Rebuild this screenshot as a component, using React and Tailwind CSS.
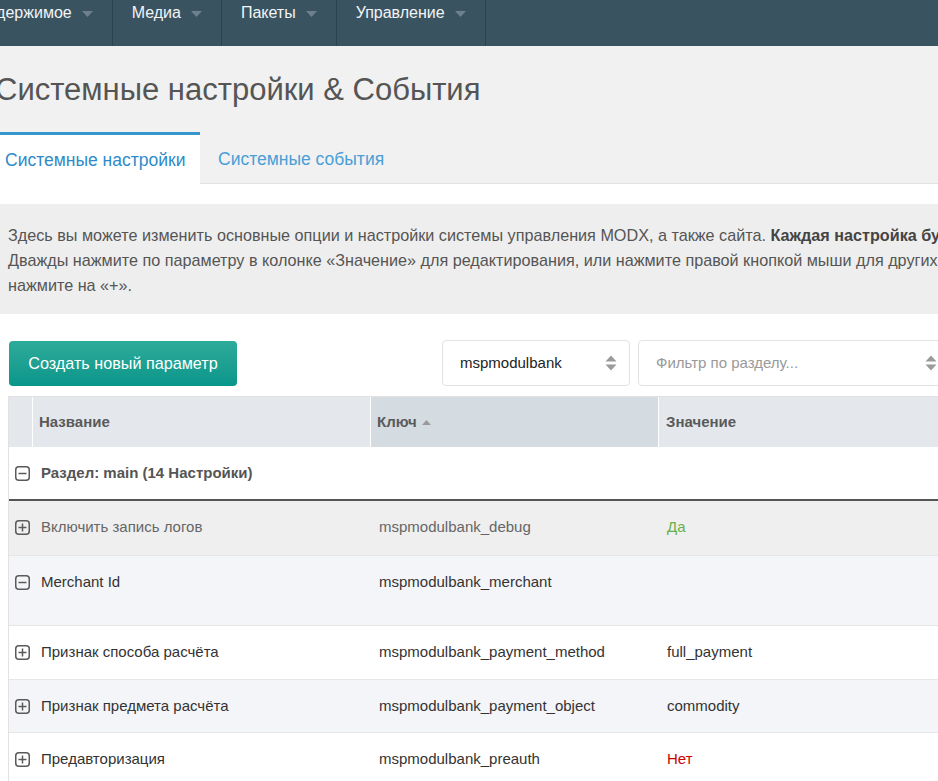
import React from "react";

const font = { fontFamily: '"Liberation Sans", Arial, sans-serif' };

function Caret() {
  return (
    <svg width="11" height="6" viewBox="0 0 11 6" className="shrink-0">
      <path d="M0 0 L11 0 L5.5 6 Z" fill="#6c818d" />
    </svg>
  );
}

function Spinner() {
  return (
    <svg width="12" height="16" viewBox="0 0 12 16" className="shrink-0">
      <path d="M6 0.5 L11.5 6.5 L0.5 6.5 Z" fill="#9a9a9a" />
      <path d="M0.5 9.5 L11.5 9.5 L6 15.5 Z" fill="#9a9a9a" />
    </svg>
  );
}

function BoxIcon({ plus }) {
  return (
    <svg width="15" height="15" viewBox="0 0 15 15" className="shrink-0">
      <rect x="0.75" y="0.75" width="13.5" height="13.5" rx="3" fill="none" stroke="#5a5a5a" strokeWidth="1.5" />
      <line x1="3.5" y1="7.5" x2="11.5" y2="7.5" stroke="#5a5a5a" strokeWidth="1.5" />
      {plus && <line x1="7.5" y1="3.5" x2="7.5" y2="11.5" stroke="#5a5a5a" strokeWidth="1.5" />}
    </svg>
  );
}

function NavItem({ label }) {
  return (
    <div className="flex items-start gap-[10px] pl-[19px] pr-[19px] pt-[4px] h-full border-r border-[#2b4250] shrink-0">
      <span className="text-[16px] text-[#f2f4f5] leading-[18px]">{label}</span>
      <span className="mt-[7px]"><Caret /></span>
    </div>
  );
}

const rows = [
  { name: "Включить запись логов", key: "mspmodulbank_debug", value: "Да", vc: "text-[#6ab04c]", bg: "bg-[#efefef]", h: "h-[55px]", muted: true, plus: true },
  { name: "Merchant Id", key: "mspmodulbank_merchant", value: "", vc: "", bg: "bg-[#f4f5f8]", h: "h-[70px]", plus: false },
  { name: "Признак способа расчёта", key: "mspmodulbank_payment_method", value: "full_payment", vc: "text-[#333]", bg: "bg-white", h: "h-[54px]", plus: true },
  { name: "Признак предмета расчёта", key: "mspmodulbank_payment_object", value: "commodity", vc: "text-[#333]", bg: "bg-[#f4f5f8]", h: "h-[53px]", plus: true },
  { name: "Предавторизация", key: "mspmodulbank_preauth", value: "Нет", vc: "text-[#cc0000]", bg: "bg-white", h: "h-[54px]", plus: true },
];

export default function App() {
  return (
    <div style={font} className="w-[938px] h-[781px] overflow-hidden bg-[#f1f1f1] relative">
      {/* Top nav */}
      <div className="h-[46px] bg-[#3a5361] flex overflow-hidden">
        <div className="flex ml-[-43px] h-full">
          <NavItem label="Содержимое" />
          <NavItem label="Медиа" />
          <NavItem label="Пакеты" />
          <NavItem label="Управление" />
        </div>
      </div>

      {/* Title */}
      <div className="ml-[-5px] mt-[26px] h-[36px] text-[31px] leading-[36px] text-[#555] whitespace-nowrap">
        Системные настройки &amp; События
      </div>

      {/* Tabs */}
      <div className="flex mt-[24px] h-[52px]">
        <div className="w-[200px] shrink-0 h-full bg-white border-t-[3px] border-[#3697cd] flex items-center pl-[5px] text-[17.5px] text-[#2e8bc9] whitespace-nowrap">
          <span className="mt-[2px]">Системные настройки</span>
        </div>
        <div className="flex-1 h-full border-b border-[#e2e2e2] flex items-center pl-[18px] text-[17.5px] text-[#4a9fd6] whitespace-nowrap">
          <span className="mt-[4px]">Системные события</span>
        </div>
      </div>

      {/* Panel */}
      <div className="bg-white pt-[20px] h-full">
        <div className="bg-[#eeeeee] h-[110px] pt-[19px] pl-[8px] text-[16.2px] leading-[25px] text-[#555] whitespace-nowrap">
          <div>
            Здесь вы можете изменить основные опции и настройки системы управления MODX, а также сайта.{" "}
            <b className="text-[#444]">Каждая настройка будет доступна сразу после её изменения.</b>
          </div>
          <div>
            Дважды нажмите по параметру в колонке «Значение» для редактирования, или нажмите правой кнопкой мыши для других опций. Для просмотра описания настройки,
          </div>
          <div>нажмите на «+».</div>
        </div>

        {/* Toolbar */}
        <div className="flex items-center mt-[26px] pl-[9px] h-[46px] whitespace-nowrap">
          <button className="w-[228px] shrink-0 h-[45px] rounded-[4px] bg-gradient-to-b from-[#2dab9a] to-[#05968a] text-white text-[16.2px] mt-[1px]">
            Создать новый параметр
          </button>
          <div className="ml-[205px] shrink-0 w-[188px] h-[46px] bg-white border border-[#e2e2e2] rounded-[4px] flex items-center justify-between pl-[17px] pr-[12px] text-[15px] text-[#222]">
            <span>mspmodulbank</span>
            <Spinner />
          </div>
          <div className="ml-[8px] w-[306px] shrink-0 h-[46px] bg-white border border-[#e2e2e2] rounded-[4px] flex items-center justify-between pl-[17px] pr-[6px] text-[15px] text-[#999]">
            <span>Фильтр по разделу...</span>
            <Spinner />
          </div>
        </div>

        {/* Table */}
        <div className="ml-[8px] mt-[10px] w-[1100px] border-l border-t border-[#e2e2e2] text-[15px]">
          <div className="flex h-[50px] bg-[#e4e8ec] font-bold text-[#5a5a5a]">
            <div className="w-[24px] border-r border-white" />
            <div className="w-[338px] border-r border-white flex items-center pl-[6px]">Название</div>
            <div className="w-[288px] bg-[#d4dbe1] border-r border-white flex items-center pl-[6px] gap-[5px]">
              Ключ
              <svg width="9" height="5" viewBox="0 0 9 5"><path d="M0 5 L4.5 0 L9 5 Z" fill="#9a9a9a" /></svg>
            </div>
            <div className="flex-1 flex items-center pl-[7px]">Значение</div>
          </div>

          <div className="flex items-center h-[54px] bg-white border-b-2 border-[#555] font-bold text-[#555]">
            <div className="w-[32px] flex justify-start pl-[6px]"><BoxIcon plus={false} /></div>
            <span>Раздел: main (14 Настройки)</span>
          </div>

          {rows.map((r, i) => (
            <div key={i} className={`flex items-start ${r.h} ${r.bg} border-b border-[#e6e6e6] ${r.muted ? "text-[#666]" : "text-[#333]"}`}>
              <div className="w-[32px] flex justify-start pt-[19px] pl-[6px]"><BoxIcon plus={r.plus} /></div>
              <div className="w-[338px] pt-[16px] leading-[20px]">{r.name}</div>
              <div className="w-[288px] pt-[16px] leading-[20px]">{r.key}</div>
              <div className={`flex-1 pt-[16px] leading-[20px] ${r.vc}`}>{r.value}</div>
            </div>
          ))}
        </div>
      </div>
    </div>
  );
}
